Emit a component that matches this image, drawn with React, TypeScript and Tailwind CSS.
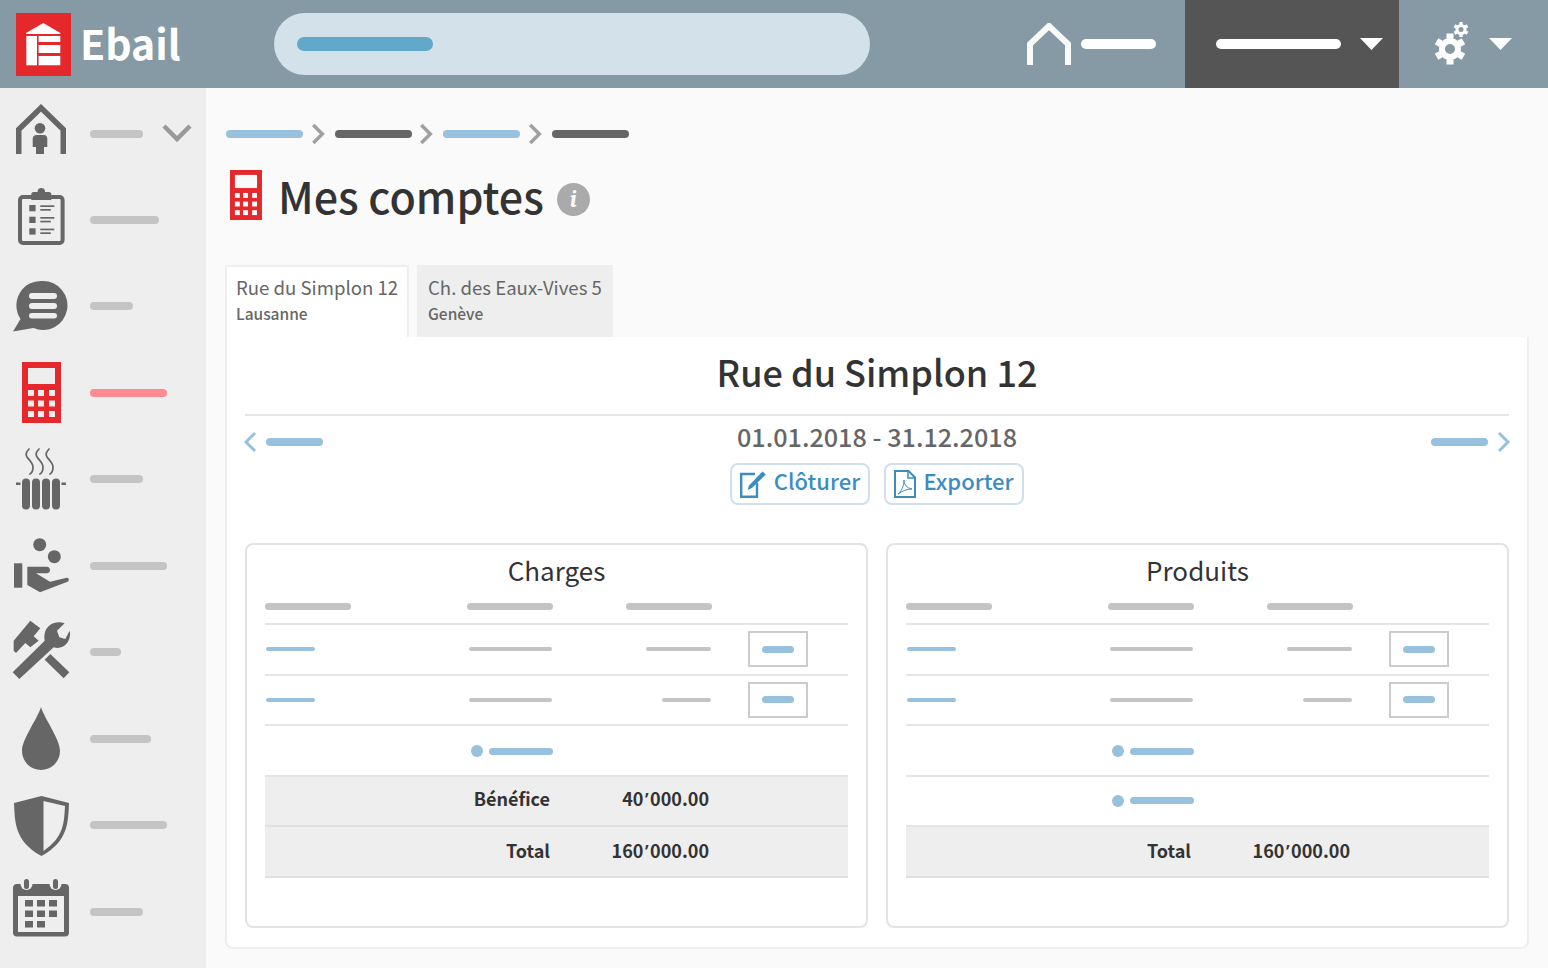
import React from 'react';

const Bar = ({ w, h = 8, color = 'bg-[#c4c4c4]' }: { w: number; h?: number; color?: string }) => (
  <span className={`block rounded-full ${color}`} style={{ width: w, height: h }} />
);

const HouseIcon = () => (
  <svg width="50" height="50" viewBox="0 0 50 50" fill="#666">
    <path d="M2.750 50V25.500L25 3.800L47.250 25.500V50" fill="none" stroke="#666" strokeWidth="5.500" />
    <circle cx="24" cy="24.300" r="5.300" />
    <path d="M16.700 35c0-2.500 1.500-4 4-4h7c2.500 0 3.600 1.500 3.600 4v8h-3.300v7h-8v-7h-3.300z" />
  </svg>
);

const ClipboardIcon = () => (
  <svg width="47" height="57" viewBox="0 0 47 57" fill="#666">
    <rect x="2" y="9" width="42.600" height="46" rx="3" fill="none" stroke="#666" strokeWidth="4" />
    <path d="M13.300 12V6c0-1 1-2 2-2h16c1 0 2 1 2 2v6z" />
    <circle cx="23.300" cy="3.700" r="3.700" />
    <rect x="11.300" y="17" width="6.300" height="6.300" />
    <rect x="11.300" y="28.700" width="6.300" height="6.300" />
    <rect x="11.300" y="40.300" width="6.300" height="6.300" />
    <rect x="22.300" y="17.300" width="14" height="1.700" />
    <rect x="22.300" y="21" width="10.500" height="1.700" />
    <rect x="22.300" y="29" width="14" height="1.700" />
    <rect x="22.300" y="32.700" width="10.500" height="1.700" />
    <rect x="22.300" y="40.600" width="14" height="1.700" />
    <rect x="22.300" y="44.300" width="10.500" height="1.700" />
  </svg>
);

const ChatIcon = () => (
  <svg width="56" height="52" viewBox="0 0 56 52" fill="#666">
    <path d="M30 1a24.500 24.500 0 1 1-9.500 47.100L0 51.500l7.500-12.500A24.500 24.500 0 0 1 30 1z" />
    <rect x="16" y="13" width="28" height="6" rx="3" fill="#eee" />
    <rect x="16" y="23" width="28" height="6" rx="3" fill="#eee" />
    <rect x="16" y="33" width="28" height="5.500" rx="2.750" fill="#eee" />
  </svg>
);

const CalcIcon = ({ scale, bg }: { scale: number; bg: string }) => (
  <svg width={39 * scale} height={61 * scale} viewBox="0 0 39 61">
    <rect width="39" height="61" fill="#e5282b" />
    <rect x="6" y="6" width="27" height="16" fill={bg} />
    {[28, 38.500, 49].map((y) =>
      [6, 16, 27].map((x) => <rect key={`${x}-${y}`} x={x} y={y} width="6" height="6" fill={bg} />),
    )}
  </svg>
);

const RadiatorIcon = () => (
  <svg width="50" height="62" viewBox="0 0 50 62" fill="#666">
    {[11, 21, 31].map((x) => (
      <path
        key={x}
        d={`M${x + 2} 1c-3 3-4 5-2 8s6 6 6 10-1 6-3 7`}
        fill="none"
        stroke="#666"
        strokeWidth="1.700"
        strokeLinecap="round"
      />
    ))}
    {[6, 16, 26, 36].map((x) => (
      <rect key={x} x={x} y="30.500" width="8" height="31" rx="4" />
    ))}
    <rect x="0" y="34.500" width="4.500" height="2.500" />
    <rect x="45.500" y="34.500" width="4.500" height="2.500" />
  </svg>
);

const HandIcon = () => (
  <svg width="55" height="55" viewBox="0 0 55 55" fill="#666">
    <circle cx="25.700" cy="6.700" r="6.500" />
    <circle cx="40.300" cy="18.700" r="6.500" />
    <rect x="0" y="25.300" width="8.300" height="24.400" />
    <path d="M13.300 28.700H32.700c4.400 0 4.400 6.600 0 6.600H22L36 43.700l16.700-4c2.200-.500 3 3.200.8 4L26 54.300 13.300 47z" />
  </svg>
);

const ToolsIcon = () => (
  <svg width="60" height="62" viewBox="20 20 180 186" fill="#666">
    <path d="M25 85L75 25L105 48L85 72L100 85L75 105L60 92L32 122L25 115z" />
    <path d="M22 180L118 85C112 50 135 28 165 30L178 33L155 55L162 75L180 80L193 55C200 85 175 115 145 105L42 200z" />
    <path d="M135 125L192 180L175 198L118 142z" />
  </svg>
);

const DropIcon = () => (
  <svg width="38" height="63" viewBox="0 0 38 63" fill="#666">
    <path d="M19 0c3 11 19 32 19 44a19 19 0 0 1-38 0C0 32 16 11 19 0z" />
  </svg>
);

const ShieldIcon = () => (
  <svg width="55" height="60" viewBox="0 0 55 60" fill="#666">
    <path d="M27.500 0L55 7c-1 18 0 38-27.500 53C0 45 1 25 0 7z" />
    <path d="M29.500 5L51 10c-1 17-1 31-21.500 45z" fill="#eee" />
  </svg>
);

const CalendarIcon = () => (
  <svg width="56" height="58" viewBox="0 0 56 58" fill="#666">
    <rect x="0" y="5" width="56" height="52.500" rx="4" />
    <rect x="5" y="17" width="46" height="36" fill="#eee" />
    <circle cx="13.500" cy="5" r="6" fill="#eee" />
    <circle cx="42.500" cy="5" r="6" fill="#eee" />
    <rect x="11" y="0" width="5" height="10" rx="2.500" />
    <rect x="40" y="0" width="5" height="10" rx="2.500" />
    {[21, 31.500, 42].map((y, i) =>
      [12, 24, 36].slice(0, i === 2 ? 2 : 3).map((x) => <rect key={`${x}-${y}`} x={x} y={y} width="8" height="6.500" />),
    )}
  </svg>
);

// icon, label width, nudge of the icon inside its row
const navItems: [React.ReactNode, number, string][] = [
  [<HouseIcon />, 53, 'pb-[8px]'],
  [<ClipboardIcon />, 69, 'pb-[6px]'],
  [<ChatIcon />, 43, ''],
  [<CalcIcon scale={1} bg="#eeeeee" />, 77, ''],
  [<RadiatorIcon />, 53, ''],
  [<HandIcon />, 77, 'pb-px'],
  [<ToolsIcon />, 31, 'pb-[4px] pl-[2px]'],
  [<DropIcon />, 61, ''],
  [<ShieldIcon />, 77, 'pt-[2px]'],
  [<CalendarIcon />, 53, 'pb-[8px]'],
];

const Chevron = () => (
  <svg width="14" height="22" viewBox="0 0 14 22" className="mx-[8.800px]">
    <path d="M1.300 2l9 9-9 9" fill="none" stroke="#a0a0a0" strokeWidth="3.500" />
  </svg>
);

const NavChevron = ({ flip }: { flip?: boolean }) => (
  <svg width="14" height="22" viewBox="0 0 14 22" className={flip ? 'rotate-180' : ''}>
    <path d="M12 2l-9 9 9 9" fill="none" stroke="#97c1dc" strokeWidth="3" />
  </svg>
);

const Caret = () => (
  <svg width="23" height="12" viewBox="0 0 23 12">
    <path d="M0 0h23L11.500 12z" fill="#fff" />
  </svg>
);

const Gear = () => (
  <svg width="34" height="43" viewBox="0 0 34 43" fill="#fff">
    <circle cx="15" cy="27" r="8" fill="none" stroke="#fff" strokeWidth="6" />
    {[0, 60, 120, 180, 240, 300].map((a) => (
      <rect key={a} x="11.500" y="11.500" width="7" height="5" transform={`rotate(${a} 15 27)`} />
    ))}
    <circle cx="26" cy="7.500" r="4" fill="none" stroke="#fff" strokeWidth="3" />
    {[0, 60, 120, 180, 240, 300].map((a) => (
      <rect key={a} x="24.400" y="0" width="3.200" height="3" transform={`rotate(${a} 26 7.500)`} />
    ))}
  </svg>
);

const EditIcon = () => (
  <svg width="26" height="27" viewBox="0 0 26 27" fill="#3c8dbf">
    <path d="M15 3H1.200V25.800H17V12" fill="none" stroke="#3c8dbf" strokeWidth="2.400" />
    <path d="M22.500 0.500L25.800 3.500L12 17L7.500 19L9 14.500z" />
  </svg>
);

const PdfIcon = () => (
  <svg width="22" height="28" viewBox="0 0 22 28">
    <path d="M1 1h13.500L21 7.500V27H1z" fill="none" stroke="#3c8dbf" strokeWidth="2" />
    <path d="M14 1v7h7" fill="none" stroke="#3c8dbf" strokeWidth="1.500" />
    <path d="M4 24c3-2 6-8 6-14 0 5 3 8 8 9-5 0-10 2-14 5z" fill="none" stroke="#3c8dbf" strokeWidth="1" />
  </svg>
);

const rowGrid = 'grid grid-cols-[202px_86px_159px_1fr] items-center';

const DataRow = ({ amount }: { amount: number }) => (
  <div className={`${rowGrid} h-[50.500px] border-b-2 border-[#e5e5e5]`}>
    <div className="pl-px">
      <Bar w={49} h={4} color="bg-[#97c1dc]" />
    </div>
    <div className="pl-[2px]">
      <Bar w={83} h={4} />
    </div>
    <div className="flex justify-end pr-px">
      <Bar w={amount} h={4} />
    </div>
    <div className="pl-[36px]">
      <div className="flex h-[36px] w-[60px] items-center justify-center border-2 border-[#cccccc]">
        <Bar w={32} h={7} color="bg-[#97c1dc]" />
      </div>
    </div>
  </div>
);

const AddRow = ({ nudge }: { nudge?: boolean }) => (
  <div className={`${rowGrid} h-[50.500px] border-b-2 border-[#e5e5e5] ${nudge ? 'pt-[2px]' : ''}`}>
    <div />
    <div className="flex items-center gap-[6px] pl-[4px]">
      <span className="block h-[12px] w-[12px] shrink-0 rounded-full bg-[#97c1dc]" />
      <Bar w={64} h={7} color="bg-[#97c1dc]" />
    </div>
  </div>
);

const TotalRow = ({ label, whole, first }: { label: string; whole: string; first?: boolean }) => (
  <div
    className={`${rowGrid} h-[50.500px] border-b-2 border-[#e0e0e0] bg-[#eeeeee] text-[18px] font-semibold leading-[26px] text-[#333] ${first ? 'pb-[5px]' : 'pb-[2px]'}`}
  >
    <div />
    <div className="flex justify-end whitespace-nowrap pr-[3px]">{label}</div>
    <div className="pr-[3px] text-right">
      {whole}
      <span className="mx-[1.500px] font-['Noto_Sans']">’</span>000.00
    </div>
  </div>
);

const Panel = ({ title, children }: { title: string; children: React.ReactNode }) => (
  <section className="h-[385px] w-[623px] rounded-lg border-2 border-[#e3e3e3] px-[18px]">
    <h3 className="h-[51px] pt-[7px] text-center text-[26px] font-normal leading-[36px] text-[#333]">{title}</h3>
    <div className={`${rowGrid} h-[29px] border-b-2 border-[#e5e5e5] pb-[7px]`}>
      <Bar w={86} h={7} />
      <Bar w={86} h={7} />
      <div className="flex justify-end">
        <Bar w={86} h={7} />
      </div>
    </div>
    {children}
  </section>
);

export default function App() {
  return (
    <div
      className="flex h-[968px] w-[1548px] flex-col overflow-hidden bg-[#fafafa]"
      style={{ fontFamily: '"Noto Sans CJK SC", "Noto Sans", sans-serif' }}
    >
      <header className="flex h-[88px] shrink-0 items-center bg-[#869aa6]">
        <svg width="55" height="63" viewBox="0 0 55 63" className="ml-[16px]">
          <rect width="55" height="63" fill="#e5282b" />
          <path d="M10 20L27.300 10L44.300 20V21H10z" fill="#fff" />
          <path d="M10.300 23H21V52.300H10.300z" fill="#fff" />
          <path d="M22.600 23H44.300V29H22.600zM22.600 32H44.300V40H22.600zM22.600 43H44.300V52.300H22.600z" fill="#fff" />
        </svg>
        <span className="ml-[9px] w-[194px] pb-[5px] text-[41px] font-semibold leading-[56px] text-white">Ebail</span>
        <div className="flex h-[62px] w-[596px] items-center rounded-full bg-[#d3e1ea] pl-[23px]">
          <Bar w={136} h={14} color="bg-[#62a8cb]" />
        </div>
        <svg width="44" height="42" viewBox="0 0 44 42" className="ml-[157px]">
          <path d="M3 42V21L22 3L41 21V42" fill="none" stroke="#fafafa" strokeWidth="6" />
        </svg>
        <div className="ml-[10px]">
          <Bar w={75} h={10} color="bg-white" />
        </div>
        <div className="ml-[29px] flex h-full w-[214px] items-center gap-[19px] bg-[#555555] pl-[31px]">
          <Bar w={125} h={10} color="bg-white" />
          <Caret />
        </div>
        <div className="ml-[36px] mt-[-1px]">
          <Gear />
        </div>
        <div className="ml-[20px]">
          <Caret />
        </div>
      </header>

      <div className="flex min-h-0 flex-1">
        <aside className="w-[206px] shrink-0 bg-[#eeeeee] pt-[2px]">
          {navItems.map(([icon, width, nudge], i) => (
            <div key={i} className="flex h-[86.500px] items-center">
              <div className={`flex w-[82px] justify-center ${nudge}`}>{icon}</div>
              <div className={`ml-[8px] ${i === 0 ? 'pt-px' : ''}`}>
                <Bar w={width} color={i === 3 ? 'bg-[#ff8a92]' : 'bg-[#c4c4c4]'} />
              </div>
              {i === 0 && (
                <svg width="30" height="18" viewBox="0 0 30 18" className="ml-[19px]">
                  <path d="M2 2l13 13L28 2" fill="none" stroke="#999" strokeWidth="4.500" />
                </svg>
              )}
            </div>
          ))}
        </aside>

        <main className="min-w-0 flex-1 pl-[19px] pr-[19px]">
          <nav className="ml-px mt-[35px] flex h-[22px] items-center">
            <Bar w={77} color="bg-[#97c1dc]" />
            <Chevron />
            <Bar w={77} color="bg-[#666666]" />
            <Chevron />
            <Bar w={77} color="bg-[#97c1dc]" />
            <Chevron />
            <Bar w={77} color="bg-[#666666]" />
          </nav>

          <div className="mt-[25px] flex h-[51px] items-center pl-[5px]">
            <CalcIcon scale={0.82} bg="#fafafa" />
            <h1 className="ml-[16px] pb-[2px] text-[43px] font-medium leading-[56px] text-[#333]">Mes comptes</h1>
            <span className="ml-[13px] mt-[7px] flex h-[33px] w-[33px] items-center justify-center rounded-full bg-[#aaaaaa] font-serif text-[24px] font-bold italic leading-none text-[#fafafa]">
              i
            </span>
          </div>

          <div className="mt-[44px] flex h-[72px] items-stretch gap-[8px]">
            <div className="w-[184px] whitespace-nowrap border-x-2 border-t-2 border-[#eeeeee] bg-white pl-[9px] pt-[6px]">
              <p className="text-[18.600px] leading-[28px] text-[#666]">Rue du Simplon 12</p>
              <p className="text-[15.500px] font-medium leading-[24px] text-[#666]">Lausanne</p>
            </div>
            <div className="w-[196px] whitespace-nowrap bg-[#eeeeee] pl-[11px] pt-[8px]">
              <p className="text-[18.600px] leading-[28px] text-[#666]">Ch. des Eaux-Vives 5</p>
              <p className="text-[15.500px] font-medium leading-[24px] text-[#666]">Genève</p>
            </div>
          </div>

          <section className="h-[612px] rounded-b-lg border-x-2 border-b-2 border-[#eeeeee] bg-white px-[18px]">
            <h2 className="h-[79px] border-b-2 border-[#e5e5e5] pt-[10px] text-center text-[36px] font-medium leading-[48px] text-[#333]">
              Rue du Simplon 12
            </h2>
            <div className="-mx-[2px] flex h-[47px] items-center justify-between">
              <div className="flex items-center gap-[9px] pt-[4px]">
                <NavChevron />
                <Bar w={57} color="bg-[#97c1dc]" />
              </div>
              <p className="pb-[8px] text-[25.200px] font-medium leading-[34px] text-[#666]">01.01.2018 - 31.12.2018</p>
              <div className="flex items-center gap-[9px] pt-[4px]">
                <Bar w={57} color="bg-[#97c1dc]" />
                <NavChevron flip />
              </div>
            </div>
            <div className="flex justify-center gap-[14px]">
              <button className="flex h-[42px] w-[140px] items-center justify-center gap-[8px] rounded-lg border-2 border-[#cfe0eb] text-[22px] font-medium leading-[30px] text-[#3c8dbf]">
                <EditIcon />
                <span className="pb-[8px]">Clôturer</span>
              </button>
              <button className="flex h-[42px] w-[140px] items-center justify-center gap-[7px] rounded-lg border-2 border-[#cfe0eb] text-[22px] font-medium leading-[30px] text-[#3c8dbf]">
                <PdfIcon />
                <span className="pb-[8px]">Exporter</span>
              </button>
            </div>
            <div className="mt-[38px] flex gap-[18px]">
              <Panel title="Charges">
                <DataRow amount={65} />
                <DataRow amount={49} />
                <AddRow nudge />
                <TotalRow first label="Bénéfice" whole="40" />
                <TotalRow label="Total" whole="160" />
              </Panel>
              <Panel title="Produits">
                <DataRow amount={65} />
                <DataRow amount={49} />
                <AddRow nudge />
                <AddRow />
                <TotalRow label="Total" whole="160" />
              </Panel>
            </div>
          </section>
        </main>
      </div>
    </div>
  );
}
